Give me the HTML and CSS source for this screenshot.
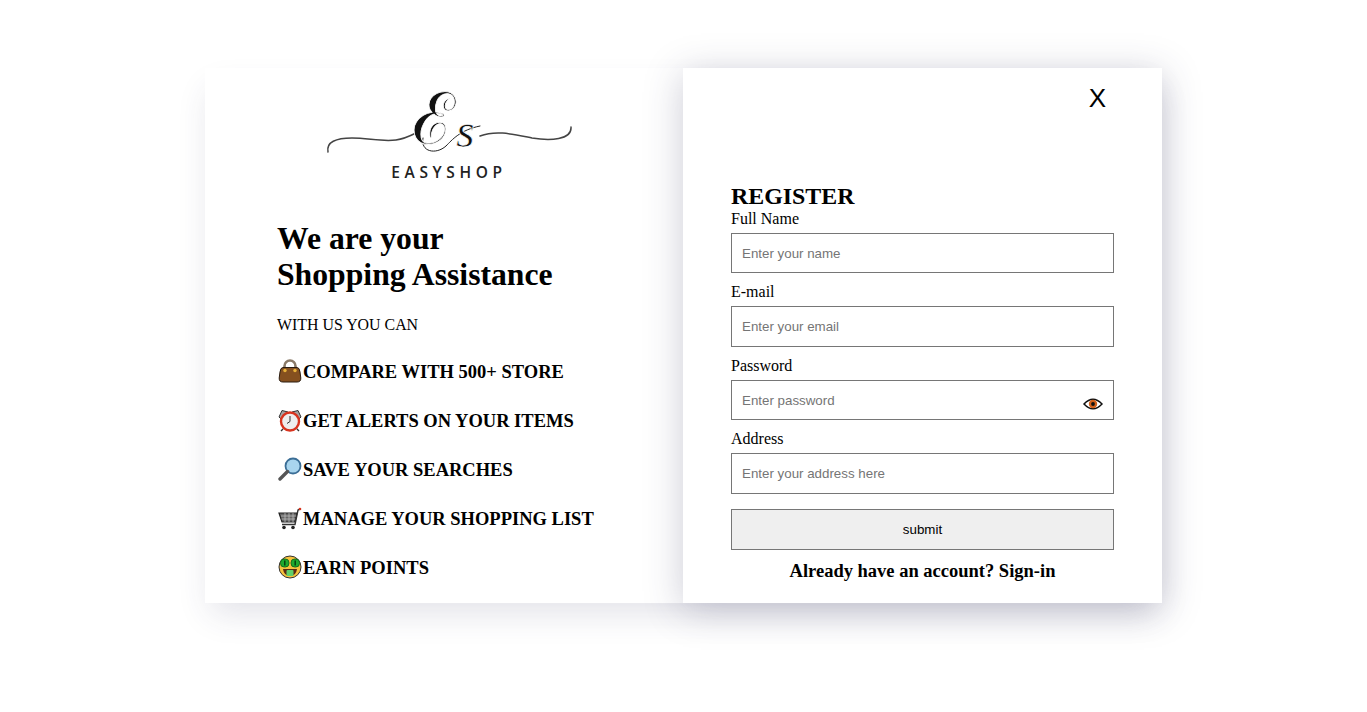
FILE: index.html
```html
<!DOCTYPE html>
<html lang="en">

<head>
    <meta charset="UTF-8">
    <meta name="viewport" content="width=device-width, initial-scale=1.0">
    <title>Easyshop Register</title>
    <link rel="stylesheet" href="styles.css">
</head>

<body>
    <div class="card">
        <section class="intro">
            <div class="logo">
                <svg width="280" height="110" viewBox="0 0 280 110">
                    <path class="flourish" d="M18 72 C16 62 26 58 42 58 C58 58 72 62 86 60 C94 59 100 56 106 53" />
                    <path class="flourish" d="M170 56 C186 50 202 54 222 58 C240 61 262 60 261 47" />
                    <path class="swash" d="M113 58 C110 72 126 75 136 66 C142 60 150 50 170 46" />
                    <text class="mono-e" x="102" y="64">ℰ</text>
                    <text class="mono-s" x="146" y="67">s</text>
                    <text class="logo-name" x="139" y="98" text-anchor="middle">EASYSHOP</text>
                </svg>
            </div>
            <h1>We are your<br>Shopping Assistance</h1>
            <p class="lead">WITH US YOU CAN</p>
            <ul class="perks">
                <li>
                    <svg class="emoji" viewBox="0 0 24 24">
                        <path d="M6.5 11 V7 a5.5 5.5 0 0 1 11 0 V11" fill="none" stroke="#8a7a68" stroke-width="2.6" />
                        <path d="M5 8.5 H19 Q21.5 8.5 22 13 L22.8 19 Q23 23 19 23 H5 Q1 23 1.2 19 L2 13 Q2.5 8.5 5 8.5 Z" fill="#85501f" stroke="#2a1c10" stroke-width="1" />
                        <circle cx="7" cy="11.5" r="1.7" fill="#e8b23a" />
                        <circle cx="17" cy="11.5" r="1.7" fill="#e8b23a" />
                    </svg>
                    <span>COMPARE WITH 500+ STORE</span>
                </li>
                <li>
                    <svg class="emoji" viewBox="0 0 24 24">
                        <path d="M1 9 L4 2.5 L10 4 L3 11 Z M23 9 L20 2.5 L14 4 L21 11 Z" fill="#a5a5a5" stroke="#333" stroke-width="1" />
                        <circle cx="12" cy="13.5" r="9" fill="#eeeeee" stroke="#d8341f" stroke-width="2.4" />
                        <path d="M12 8 V13.5 L9 15.5" fill="none" stroke="#333" stroke-width="1" />
                        <path d="M5 21 L3 23 M19 21 L21 23" stroke="#333" stroke-width="1.4" />
                    </svg>
                    <span>GET ALERTS ON YOUR ITEMS</span>
                </li>
                <li>
                    <svg class="emoji" viewBox="0 0 24 24">
                        <circle cx="15" cy="9" r="7.5" fill="#a9d5ee" stroke="#3b6e96" stroke-width="1.8" />
                        <path d="M9.5 14.5 L2 22" stroke="#555" stroke-width="3.4" stroke-linecap="round" />
                    </svg>
                    <span>SAVE YOUR SEARCHES</span>
                </li>
                <li>
                    <svg class="emoji" viewBox="0 0 24 24">
                        <path d="M1 7 H19 L17 16 H4 Z" fill="#666" stroke="#222" stroke-width="1.2" />
                        <path d="M3 10 H18 M3.5 13 H17.5 M7 7 V16 M11 7 V16 M15 7 V16" stroke="#bbb" stroke-width=".8" />
                        <path d="M4 18.5 H17 L20 4 L22 3" fill="none" stroke="#333" stroke-width="1.4" />
                        <circle cx="22" cy="3" r="1.3" fill="#d8341f" />
                        <circle cx="6" cy="21.5" r="1.8" fill="#222" />
                        <circle cx="15" cy="21.5" r="1.8" fill="#222" />
                    </svg>
                    <span>MANAGE YOUR SHOPPING LIST</span>
                </li>
                <li>
                    <svg class="emoji" viewBox="0 0 24 24">
                        <circle cx="12" cy="12" r="11" fill="#f6c23c" stroke="#333" stroke-width="1" />
                        <rect x="2.5" y="4" width="8.5" height="8" rx="3.6" fill="#1faa2e" stroke="#0d5c18" stroke-width=".8" />
                        <rect x="13" y="4" width="8.5" height="8" rx="3.6" fill="#1faa2e" stroke="#0d5c18" stroke-width=".8" />
                        <path d="M6.8 5.5 V10.5 M17.2 5.5 V10.5" stroke="#07380d" stroke-width="1.4" />
                        <path d="M5 14 H19 Q18 21 12 21 Q6 21 5 14 Z" fill="#5b2a12" />
                        <rect x="8.5" y="15" width="7" height="6" rx="1" fill="#5fd06a" />
                    </svg>
                    <span>EARN POINTS</span>
                </li>
            </ul>
        </section>

        <section class="register">
            <div class="close-row">X</div>
            <h2>REGISTER</h2>
            <form class="register-form">
                <div class="field">
                    <label for="name">Full Name</label>
                    <input type="text" id="name" placeholder="Enter your name">
                </div>
                <div class="field">
                    <label for="email">E-mail</label>
                    <input type="text" id="email" placeholder="Enter your email">
                </div>
                <div class="field password-field">
                    <label for="password">Password</label>
                    <input type="password" id="password" placeholder="Enter password">
                    <svg class="eye" viewBox="0 0 20 14" width="20" height="14">
                        <path d="M1 7 Q10 -2.5 19 7 Q10 16.5 1 7 Z" fill="#fff" stroke="#111" stroke-width="1.5" />
                        <circle cx="10" cy="7" r="4.2" fill="#d2601a" />
                        <circle cx="10" cy="7" r="1.9" fill="#111" />
                    </svg>
                </div>
                <div class="field">
                    <label for="address">Address</label>
                    <input type="text" id="address" placeholder="Enter your address here">
                </div>
                <button type="button" class="submit-btn">submit</button>
            </form>
            <p class="signin">Already have an account? Sign-in</p>
        </section>
    </div>
</body>

</html>
```

FILE: styles.css
```css
html {
    height: 100%;
}

body {
    min-height: 100%;
    margin: 0;
    padding: 68px 0 0 205px;
    box-sizing: border-box;
    font-family: "Liberation Serif", serif;
    color: black;
    background-color: white;
}

.card {
    display: flex;
    width: 957px;
    height: 535px;
    box-shadow: rgba(50, 50, 93, 0.14) 0 16px 32px -6px;
}

.intro {
    width: 478px;
    padding: 0 0 0 72px;
    box-sizing: border-box;
    background-color: white;
}

.logo {
    height: 110px;
    margin: 12px 0 0 33px;
}

.logo svg {
    display: block;
    overflow: visible;
}

.flourish {
    fill: none;
    stroke: #444;
    stroke-width: 1.5;
    stroke-linecap: round;
}

.swash {
    fill: none;
    stroke: #222;
    stroke-width: 1;
    stroke-linecap: round;
}

.mono-e {
    font-family: "DejaVu Serif", serif;
    font-size: 72px;
    fill: #111;
    stroke: white;
    stroke-width: 0.8px;
}

.mono-s {
    font-family: "Liberation Serif", serif;
    font-style: italic;
    font-size: 48px;
    fill: #111;
    stroke: white;
    stroke-width: 0.7px;
}

.logo-name {
    font-family: "Open Sans", sans-serif;
    font-size: 15.5px;
    font-weight: 600;
    letter-spacing: 4.6px;
    fill: #222;
}

h1 {
    font-size: 31.7px;
    line-height: 36px;
    margin: 31px 0 0;
}

.lead {
    font-size: 15.9px;
    margin: 23px 0 0;
}

.perks {
    list-style: none;
    margin: 0;
    padding: 1px 0 0;
    font-size: 18.5px;
    font-weight: bold;
}

.perks li {
    display: flex;
    align-items: center;
    height: 24px;
    margin-top: 25px;
    white-space: nowrap;
}

.emoji {
    flex-shrink: 0;
    width: 24px;
    height: 24px;
    margin: -2px 1px 0 1px;
}

.register {
    position: relative;
    width: 479px;
    padding: 0 48px;
    box-sizing: border-box;
    background-color: white;
    box-shadow: rgba(50, 50, 93, 0.25) 0 6px 36px 0;
}

.close-row {
    display: flex;
    justify-content: flex-end;
    height: 115px;
    padding: 15px 8px 0 0;
    box-sizing: border-box;
    font-family: "Liberation Sans", sans-serif;
    font-size: 26px;
}

h2 {
    font-size: 23.9px;
    line-height: 27px;
    margin: 0;
}

.field {
    position: relative;
    margin-bottom: 10.3px;
}

.field label {
    display: block;
    margin-bottom: 4.2px;
    font-size: 16px;
    line-height: 18.4px;
}

.field input {
    display: block;
    width: 100%;
    height: 40.6px;
    padding: 1px 10px 0;
    box-sizing: border-box;
    border: 1px solid #767676;
    font-family: "Liberation Sans", sans-serif;
    font-size: 13.33px;
}

.eye {
    position: absolute;
    right: 11px;
    bottom: 9px;
}

.submit-btn {
    display: block;
    width: 100%;
    height: 41px;
    margin-top: 15px;
    border: 1px solid #767676;
    background-color: #efefef;
    font-family: "Liberation Sans", sans-serif;
    font-size: 13.33px;
    color: black;
}

.signin {
    margin: 11px 0 0;
    font-size: 18.5px;
    font-weight: bold;
    text-align: center;
}
```
